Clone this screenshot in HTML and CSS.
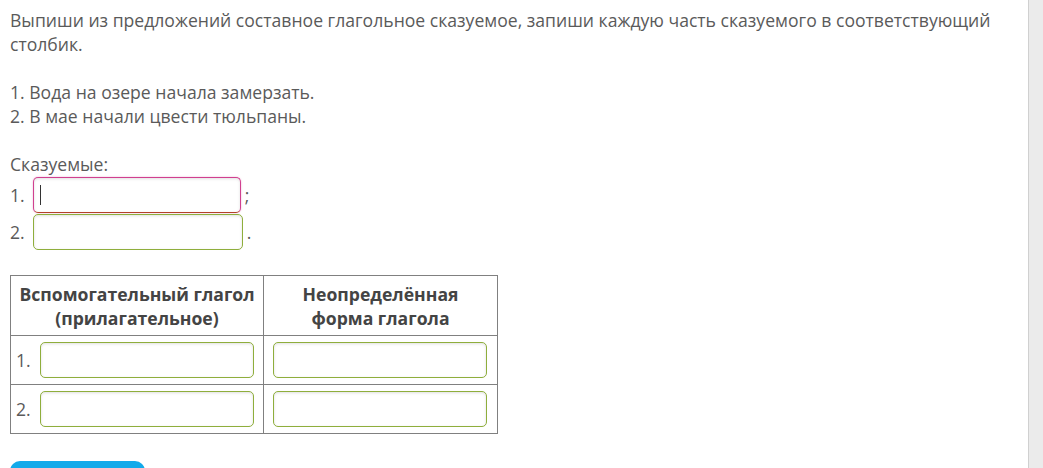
FILE: index.html
```html
<!DOCTYPE html>
<html lang="ru">
<head>
    <meta charset="UTF-8">
    <title>Составное глагольное сказуемое</title>
    <link rel="stylesheet" href="styles.css">
</head>
<body>
    <div class="page">
        <main class="content">
            <p class="task">Выпиши из предложений составное глагольное сказуемое, запиши каждую часть сказуемого в соответствующий столбик.</p>

            <p class="lines">1. Вода на озере начала замерзать.<br>2. В мае начали цвести тюльпаны.</p>

            <div class="answers">
                <div class="label">Сказуемые:</div>
                <div class="answer-row">1.<span class="field focused"><span class="caret"></span></span>;</div>
                <div class="answer-row">2.<span class="field wide"></span>.</div>
            </div>

            <table class="parts">
                <tr>
                    <th class="col1">Вспомогательный глагол (прилагательное)</th>
                    <th class="col2">Неопределённая<br>форма глагола</th>
                </tr>
                <tr>
                    <td><span class="num">1.</span><span class="field cell"></span></td>
                    <td><span class="field cell"></span></td>
                </tr>
                <tr>
                    <td><span class="num">2.</span><span class="field cell"></span></td>
                    <td><span class="field cell"></span></td>
                </tr>
            </table>

            <div class="button"></div>
        </main>
        <aside class="side"></aside>
    </div>
</body>
</html>
```

FILE: styles.css
```css
body {
    margin: 0;
    font-family: "Open Sans", "DejaVu Sans", sans-serif;
    font-size: 17.6px;
    color: #5a5a5a;
    background: #fff;
    overflow: hidden;
}
.page {
    display: flex;
    height: 468px;
    overflow: hidden;
}
.content {
    flex: 1;
    padding: 8px 10px 0 10px;
    line-height: 24px;
}
.side {
    width: 14px;
    background: #ebebeb;
    border-left: 1px solid #d0d0d0;
}
.task {
    margin: 0 0 24px;
}
.lines {
    margin: 0 0 24px;
}
.answer-row {
    display: flex;
    align-items: center;
    height: 37px;
}
.answer-row .field {
    margin: 0 4px 0 8px;
}
.field {
    display: inline-block;
    box-sizing: border-box;
    width: 208px;
    height: 36px;
    border: 1px solid #8fae3c;
    border-radius: 5px;
    background: #fff;
    box-shadow: inset 0 1px 3px rgba(0, 0, 0, 0.12);
    position: relative;
}
.field.wide {
    width: 210px;
}
.field.focused {
    border-color: #d0408f;
    border-bottom-color: #b3402a;
    box-shadow: inset 0 1px 3px rgba(0, 0, 0, 0.12), 0 0 2px rgba(208, 64, 143, 0.4);
}
.caret {
    position: absolute;
    left: 6px;
    top: 7px;
    width: 1px;
    height: 20px;
    background: #333;
}
.parts {
    border-collapse: collapse;
    margin-top: 25px;
}
.parts th, .parts td {
    border: 1px solid #808080;
}
.parts th {
    font-weight: bold;
    color: #444;
    text-align: center;
    height: 59px;
    padding: 0 4px;
    line-height: 24px;
}
.parts .col1 {
    width: 244px;
}
.parts .col2 {
    width: 225px;
}
.parts td {
    height: 48px;
    padding: 0 9px;
    white-space: nowrap;
}
.parts td:first-child {
    padding-left: 5px;
}
.num {
    display: inline-block;
    width: 24px;
    vertical-align: middle;
}
.field.cell {
    width: 214px;
    vertical-align: middle;
}
.button {
    margin-top: 27px;
    width: 135px;
    height: 40px;
    border-radius: 10px;
    background: #12aaea;
}
```
